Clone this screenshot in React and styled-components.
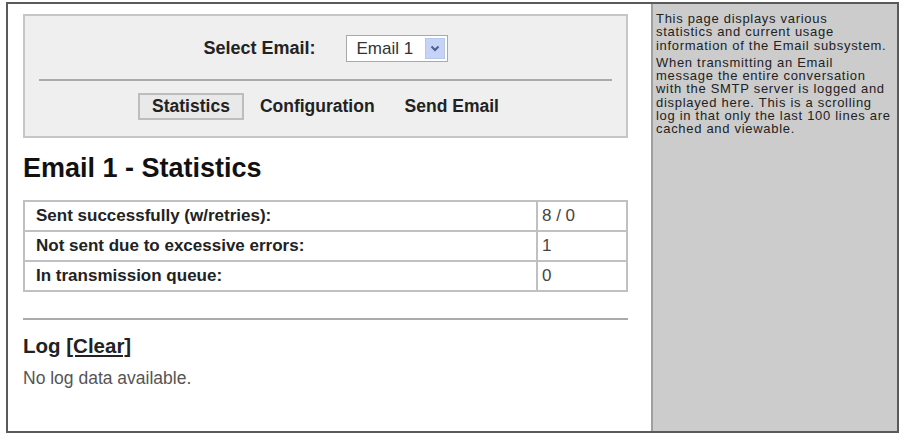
import React from "react";
import styled, { createGlobalStyle } from "styled-components";

const GlobalStyle = createGlobalStyle`
  html, body {
    margin: 0;
    padding: 0;
    background: #ffffff;
  }
  body {
    font-family: "Liberation Sans", Arial, sans-serif;
    color: #222;
  }
`;

const Frame = styled.div`
  box-sizing: border-box;
  margin: 2px 0 0 6px;
  width: 893px;
  height: 431px;
  border: 2px solid #5a5a5a;
  display: grid;
  grid-template-columns: 643px 1fr;
  overflow: hidden;
`;

const Main = styled.main`
  padding: 10px 23px 0 15px;
  background: #fff;
`;

const Aside = styled.aside`
  background: #cccccc;
  border-left: 2px solid #9f9f9f;
  padding: 8px 4px 0 3px;
  font-size: 13px;
  letter-spacing: 0.7px;
  line-height: 13.3px;
  color: #222;
`;

const Note = styled.p`
  margin: 0 0 4px;
  white-space: nowrap;
`;

const ControlPanel = styled.section`
  box-sizing: border-box;
  height: 124px;
  border: 2px solid #c6c6c6;
  background: #efefef;
  padding: 19px 0 16px;
  display: flex;
  flex-direction: column;
`;

const PickerRow = styled.div`
  display: flex;
  justify-content: center;
  align-items: center;
  height: 27px;
`;

const PickerLabel = styled.label`
  font-size: 18px;
  font-weight: bold;
  color: #222;
  margin-right: 30px;
`;

const SelectBox = styled.div`
  box-sizing: border-box;
  width: 102px;
  height: 27px;
  border: 1px solid #a9a9ad;
  background: #fff;
  display: flex;
  align-items: center;
  justify-content: space-between;
  padding: 0 2px 0 10px;
  font-size: 17px;
  color: #333;
`;

const ArrowButton = styled.span`
  box-sizing: border-box;
  width: 20px;
  height: 21px;
  background: #c4d3f6;
  border: 1px solid #b7c7ee;
  display: flex;
  align-items: center;
  justify-content: center;
`;

const Divider = styled.hr`
  border: 0;
  height: 2px;
  background: #a9a9a9;
  margin: 17px 14px 0;
`;

const TabRow = styled.nav`
  display: flex;
  justify-content: center;
  gap: 2px;
  margin-top: 12px;
`;

const Tab = styled.span`
  box-sizing: border-box;
  height: 27px;
  display: flex;
  align-items: center;
  padding: 0 12px;
  font-size: 17.5px;
  font-weight: bold;
  color: #222;
  border: 2px solid ${(p) => (p.$active ? "#bdbdbd" : "transparent")};
  background: ${(p) => (p.$active ? "#e9e9e9" : "transparent")};
`;

const Heading = styled.h1`
  margin: 15px 0 16px;
  font-size: 27px;
  line-height: 31px;
  font-weight: bold;
  color: #111;
`;

const StatsTable = styled.table`
  width: 100%;
  border-collapse: collapse;
  border: 2px solid #c0c0c0;
`;

const LabelCell = styled.th`
  height: 28px;
  padding: 0 0 0 11px;
  text-align: left;
  font-size: 17px;
  font-weight: bold;
  color: #222;
  border: 2px solid #c0c0c0;
`;

const ValueCell = styled.td`
  width: 84px;
  padding: 0 0 0 4px;
  font-size: 17px;
  color: #444;
  border: 2px solid #c0c0c0;
`;

const Rule = styled.hr`
  border: 0;
  height: 2px;
  background: #aaaaaa;
  margin: 26px 0 0;
`;

const LogTitle = styled.h2`
  margin: 14px 0 0;
  font-size: 20.5px;
  line-height: 23px;
  font-weight: bold;
  color: #222;
`;

const ClearLink = styled.a`
  color: #222;
  text-decoration: underline;
  cursor: pointer;
`;

const LogText = styled.p`
  margin: 11px 0 0;
  font-size: 17.5px;
  color: #555;
`;

const stats = [
  { label: "Sent successfully (w/retries):", value: "8 / 0" },
  { label: "Not sent due to excessive errors:", value: "1" },
  { label: "In transmission queue:", value: "0" },
];

export default function App() {
  return (
    <>
      <GlobalStyle />
      <Frame>
        <Main>
          <ControlPanel>
            <PickerRow>
              <PickerLabel>Select Email:</PickerLabel>
              <SelectBox>
                <span>Email 1</span>
                <ArrowButton>
                  <svg width="10" height="7" viewBox="0 0 10 7">
                    <path d="M1.5 1.5 L5 5 L8.5 1.5" fill="none" stroke="#4b5f8a" strokeWidth="2" />
                  </svg>
                </ArrowButton>
              </SelectBox>
            </PickerRow>
            <Divider />
            <TabRow>
              <Tab $active>Statistics</Tab>
              <Tab>Configuration</Tab>
              <Tab>Send Email</Tab>
            </TabRow>
          </ControlPanel>

          <Heading>Email 1 - Statistics</Heading>

          <StatsTable>
            <tbody>
              {stats.map((s) => (
                <tr key={s.label}>
                  <LabelCell>{s.label}</LabelCell>
                  <ValueCell>{s.value}</ValueCell>
                </tr>
              ))}
            </tbody>
          </StatsTable>

          <Rule />
          <LogTitle>
            Log <ClearLink>[Clear]</ClearLink>
          </LogTitle>
          <LogText>No log data available.</LogText>
        </Main>

        <Aside>
          <Note>
            This page displays various
            <br />
            statistics and current usage
            <br />
            information of the Email subsystem.
          </Note>
          <Note>
            When transmitting an Email
            <br />
            message the entire conversation
            <br />
            with the SMTP server is logged and
            <br />
            displayed here. This is a scrolling
            <br />
            log in that only the last 100 lines are
            <br />
            cached and viewable.
          </Note>
        </Aside>
      </Frame>
    </>
  );
}
